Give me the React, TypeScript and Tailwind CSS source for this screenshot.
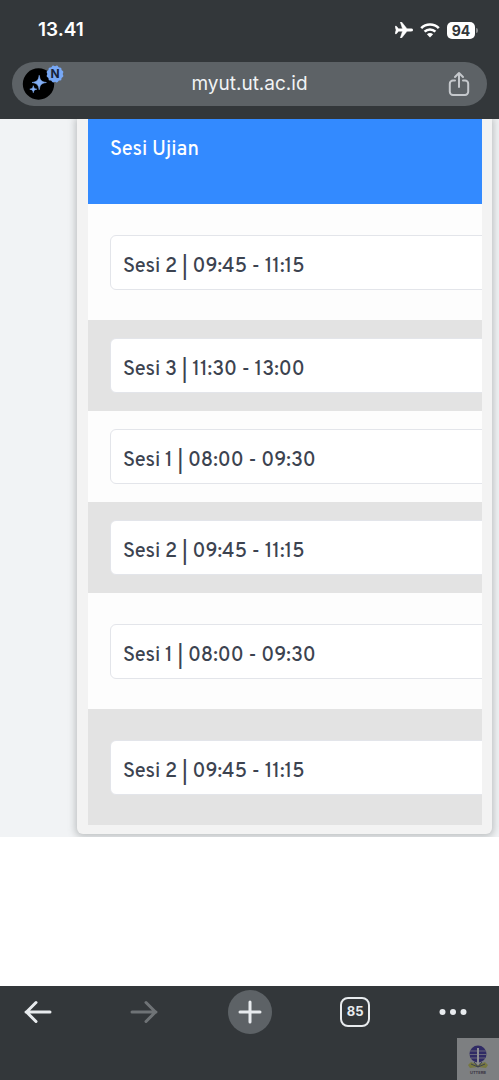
import { useState } from "react"

type Session = {
  id: number
  label: string
  tall?: boolean
}

const sessions: Session[] = [
  { id: 1, label: "Sesi 2 | 09:45 - 11:15", tall: true },
  { id: 2, label: "Sesi 3 | 11:30 - 13:00" },
  { id: 3, label: "Sesi 1 | 08:00 - 09:30" },
  { id: 4, label: "Sesi 2 | 09:45 - 11:15" },
  { id: 5, label: "Sesi 1 | 08:00 - 09:30", tall: true },
  { id: 6, label: "Sesi 2 | 09:45 - 11:15", tall: true },
]

function StatusBar() {
  return (
    <div className="flex h-[62px] items-center justify-between pr-[21px] pb-0.5 pl-[38px] text-white">
      <span className="text-[19px] font-semibold">13.41</span>
      <div className="flex items-center gap-[7px]">
        <svg width="18" height="16" viewBox="0 0 18 16" fill="currentColor" stroke="currentColor" strokeWidth="0.5" aria-label="Mode pesawat">
          <path d="M18 8c0-.8-1-1.2-2-1.2h-4L7.2.7C7 .3 6.700 0 6.300 0H5.300l2.200 6.800H3.500L1.500 4.300H0L1.100 8 0 11.700h1.500l2-2.500h4L5.300 16h1c.4 0 .7-.3.900-.7L12 9.200h4c1 0 2-.4 2-1.200Z" />
        </svg>
        <svg width="20" height="15" viewBox="0 0 20 15" fill="none" stroke="currentColor" strokeWidth="2.600" aria-label="Wi-Fi">
          <path d="M1.200 5.100C6 .2 14 .2 18.800 5.100" />
          <path d="M4.600 8.700c3-3 7.800-3 10.800 0" />
          <path d="M10 14.500 6.900 11.300c1.800-1.600 4.400-1.600 6.200 0Z" fill="currentColor" stroke="none" />
        </svg>
        <div className="flex items-center gap-px">
          <span className="flex h-[17px] w-7 items-center justify-center rounded-[5px] bg-white text-[14px] font-bold text-[#33373a]">
            94
          </span>
          <span className="h-[5px] w-[2px] rounded-r-full bg-[#85888a]" />
        </div>
      </div>
    </div>
  )
}

function AddressBar() {
  return (
    <div className="mx-3 grid h-11 grid-cols-[1fr_auto_1fr] items-center rounded-full bg-[#5d6266] px-2">
      <button aria-label="Asisten" className="w-fit">
        <svg width="46" height="44" viewBox="0 0 46 44">
          <circle cx="18.500" cy="22" r="15.700" fill="#000" />
          <path d="M19.200 13.300c.8 5 2.200 6.500 7.200 7.200-5 .8-6.400 2.200-7.200 7.200-.8-5-2.200-6.400-7.200-7.200 5-.7 6.400-2.200 7.200-7.200ZM13.300 23.700c.4 2.400 1.100 3.100 3.500 3.500-2.400.4-3.100 1.100-3.500 3.500-.4-2.400-1.100-3.100-3.500-3.500 2.400-.4 3.100-1.100 3.500-3.500Z" fill="#83aff5" stroke="#83aff5" strokeWidth="0.6" />
          <g fill="#78a8f5">
            <rect x="28.500" y="5.500" width="13" height="13" rx="1.500" />
            <rect x="28.500" y="5.500" width="13" height="13" rx="1.500" transform="rotate(30 35 12)" />
            <rect x="28.500" y="5.500" width="13" height="13" rx="1.500" transform="rotate(60 35 12)" />
          </g>
          <text x="35" y="16" textAnchor="middle" className="font-['Inter',sans-serif] text-[12px] font-bold" fill="#172338">N</text>
        </svg>
      </button>
      <span className="text-[19px] text-[#f1f3f5]">myut.ut.ac.id</span>
      <button aria-label="Bagikan" className="mr-2 justify-self-end text-[#c5c8cc]">
        <svg width="24" height="26" viewBox="0 0 24 26" fill="none" stroke="currentColor" strokeWidth="2" strokeLinecap="round" strokeLinejoin="round">
          <path d="M8 9.500H6A3.200 3.200 0 0 0 2.800 12.700v8A3.200 3.200 0 0 0 6 23.900h12a3.200 3.200 0 0 0 3.200-3.200v-8A3.200 3.200 0 0 0 18 9.500h-2" />
          <path d="M12 16V2.500M8 6l4-4 4 4" />
        </svg>
      </button>
    </div>
  )
}

function SessionTable() {
  return (
    <section className="mr-[7px] ml-[77px] rounded-b-md bg-[#f3f3f3] pr-2.5 pb-[9px] pl-[11px] shadow-[0_1px_7px_2px_rgba(100,105,105,0.35)]">
      <div className="overflow-hidden">
        <table className="w-full table-fixed text-left font-['Overpass','Lato',sans-serif] text-[20px]">
          <thead>
            <tr className="h-[85px] bg-[#338aff] text-white">
              <th className="pt-4 pl-[22px] align-top font-medium">Sesi Ujian</th>
            </tr>
          </thead>
          <tbody>
            {sessions.map(session => (
              <tr key={session.id} className="bg-[#fdfdfd] even:bg-[#e3e3e3]">
                <td className={session.tall ? "pt-[31px] pb-[30px] pl-[22px]" : "py-[18px] pl-[22px]"}>
                  <input
                    aria-label="Sesi Ujian"
                    readOnly
                    defaultValue={session.label}
                    className="block h-[55px] w-[120%] rounded-md border border-[#e3e5ea] bg-white px-3 pt-2 font-medium text-[#3c4350]"
                  />
                </td>
              </tr>
            ))}
          </tbody>
        </table>
      </div>
    </section>
  )
}

function UniversityLogo() {
  return (
    <svg width="42" height="42" viewBox="0 0 42 42" className="absolute right-0 bottom-0" aria-label="UT">
      <rect width="42" height="42" fill="#7d7f81" />
      <circle cx="21" cy="16" r="8.500" fill="#302b65" />
      <path d="M13 13h16M12.500 16.500h17M14 20h14" stroke="#77777f" strokeWidth="0.8" />
      <path d="M21 10v18" stroke="#8f8f94" strokeWidth="2" />
      <path d="m11 27 3-3 7 3 7-3 3 3-2 3-8-1-8 1Z" fill="#77783f" />
      <path d="m14 26 7 3 7-3M17 24l4 5 4-5" fill="none" stroke="#3d4150" strokeWidth="1" />
      <text x="21" y="36" textAnchor="middle" className="font-['Inter',sans-serif] text-[4px] font-bold" fill="#393443">UTTERB</text>
    </svg>
  )
}

function BottomBar({ tabs, addTab }: { tabs: number; addTab: () => void }) {
  return (
    <footer className="relative h-[94px] bg-[#33373a] pt-1 text-[#e8ebee]">
      <nav className="flex items-center justify-between px-4">
        <button aria-label="Kembali" className="flex size-11 items-center justify-center">
          <svg width="28" height="24" viewBox="0 0 28 24" fill="none" stroke="currentColor" strokeWidth="3" strokeLinecap="round" strokeLinejoin="round">
            <path d="M26 12H2M12 2.500 2.500 12l9.500 9.500" />
          </svg>
        </button>
        <button aria-label="Maju" disabled className="flex size-11 items-center justify-center text-[#6f7376]">
          <svg width="28" height="24" viewBox="0 0 28 24" fill="none" stroke="currentColor" strokeWidth="3" strokeLinecap="round" strokeLinejoin="round">
            <path d="M2 12h24M16 2.500l9.500 9.500-9.500 9.500" />
          </svg>
        </button>
        <button aria-label="Tab baru" onClick={addTab} className="flex size-11 items-center justify-center rounded-full bg-[#5d6266]">
          <svg width="24" height="24" viewBox="0 0 24 24" fill="none" stroke="currentColor" strokeWidth="3" strokeLinecap="round">
            <path d="M12 2v20M2 12h20" />
          </svg>
        </button>
        <button aria-label="Daftar tab" className="flex size-11 items-center justify-center">
          <span className="flex size-[30px] items-center justify-center rounded-lg border-2 border-current text-[13px] font-bold">
            {tabs}
          </span>
        </button>
        <button aria-label="Menu" className="flex size-11 items-center justify-start">
          <svg width="28" height="8" viewBox="0 0 28 8" fill="currentColor">
            <circle cx="3.500" cy="4" r="3" />
            <circle cx="14" cy="4" r="3" />
            <circle cx="24.500" cy="4" r="3" />
          </svg>
        </button>
      </nav>
      <UniversityLogo />
    </footer>
  )
}

function App() {
  const [tabs, setTabs] = useState(85)

  return (
    <div className="flex min-h-screen flex-col bg-white font-['Inter',sans-serif]">
      {/* HEADER */}
      <header className="relative z-10 bg-[#33373a] pb-[13px]">
        <StatusBar />
        <AddressBar />
      </header>

      {/* MAIN */}
      <main className="grow">
        <div className="overflow-hidden bg-[#f1f3f5] pb-[3px]">
          <SessionTable />
        </div>
      </main>

      <BottomBar tabs={tabs} addTab={() => setTabs(tabs + 1)} />
    </div>
  )
}

export default App
